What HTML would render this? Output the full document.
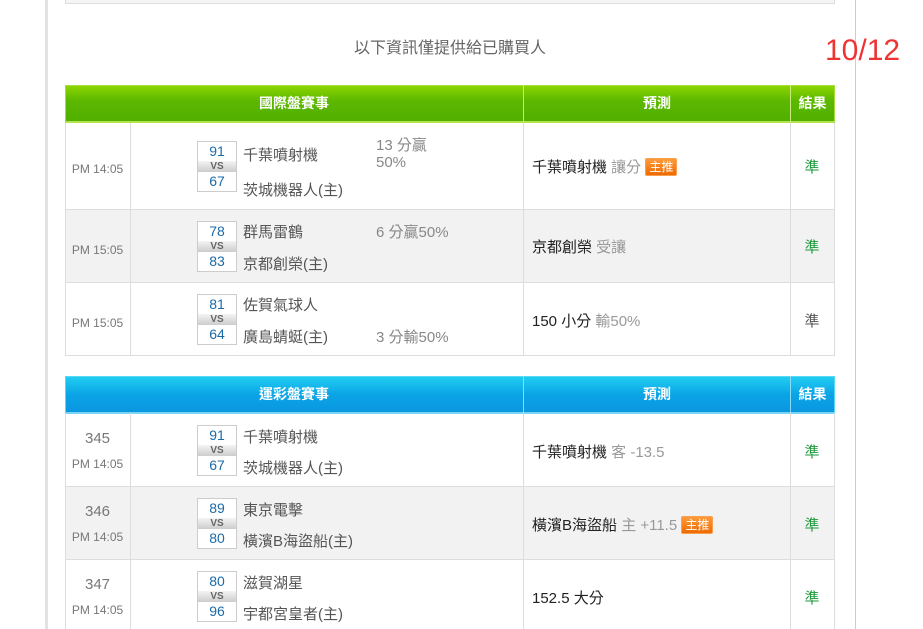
<!DOCTYPE html>
<html><head><meta charset="utf-8">
<style>
*{margin:0;padding:0;box-sizing:border-box}
body{width:923px;height:629px;overflow:hidden;background:#fff;font-family:"Liberation Sans","Noto Sans CJK TC",sans-serif;position:relative;color:#555}
.a{position:absolute;white-space:nowrap}
.vl{position:absolute;width:1px;background:#ddd}
.hl{position:absolute;height:1px;background:#ddd}
.hdr{position:absolute;color:#fff;font-weight:bold;font-size:14px;text-align:center;line-height:37px}
.g{background:linear-gradient(#8fd800,#5db800 40%,#4fae00)}
.b{background:linear-gradient(#22d0f2,#0ba4e6 50%,#0a96e0)}
.sb{position:absolute;width:40px;height:51px;border:1px solid #ccc;background:#fff}
.sb div{height:19px;text-align:center;font-size:14px;color:#1a6aa8;line-height:19px}
.sb .vs{height:11px;line-height:11px;font-size:10px;font-weight:bold;color:#666;background:linear-gradient(#f4f4f4,#ccc);}
.t{font-size:15px;color:#555}
.tm{font-size:12px;color:#777;text-align:center;width:65px}
.num{font-size:15px;color:#777;text-align:center;width:65px}
.p{font-size:15px;color:#222}
.p span{color:#999}
.ok{font-size:15px;color:#1a9a3a;width:44px;text-align:center}
.tag{display:inline-block;background:linear-gradient(#ff9a3a,#ee6a00);color:#fff;font-size:12px;line-height:16px;padding:0 3px;border:1px solid #f7a050;border-radius:2px;vertical-align:1px}
</style></head><body>
<div class="a" style="left:45px;top:0;width:3px;height:629px;background:#e2e2e2"></div>
<div class="vl" style="left:855px;top:0;height:629px;background:#ccc"></div>
<div class="a" style="left:65px;top:0;width:770px;height:4px;border:1px solid #ddd;border-top:0;background:#f4f4f4"></div>
<div class="a" style="left:0;top:34px;width:900px;text-align:center;font-size:16px;color:#666">以下資訊僅提供給已購買人</div>
<div class="a" style="left:825px;top:34px;font-size:30px;color:#e33">10/12</div>

<!-- table 1 -->
<div class="hdr g" style="left:65px;top:85px;width:458px;height:38px">國際盤賽事</div>
<div class="hdr g" style="left:524px;top:85px;width:266px;height:38px">預測</div>
<div class="hdr g" style="left:791px;top:85px;width:43px;height:38px">結果</div>
<div class="a" style="left:65px;top:85px;width:770px;height:38px;border:1px solid #a8dc3a;border-bottom:2px solid #b4e44a;pointer-events:none"></div>
<div class="vl" style="left:523px;top:85px;height:38px;background:#c8ec7a"></div>
<div class="vl" style="left:790px;top:85px;height:38px;background:#c8ec7a"></div>
<div class="a" style="left:66px;top:209px;width:768px;height:73px;background:#f2f2f2"></div>
<div class="vl" style="left:65px;top:123px;height:233px"></div>
<div class="vl" style="left:130px;top:123px;height:233px"></div>
<div class="vl" style="left:523px;top:123px;height:233px"></div>
<div class="vl" style="left:790px;top:123px;height:233px"></div>
<div class="vl" style="left:834px;top:123px;height:233px"></div>
<div class="hl" style="left:65px;top:209px;width:770px"></div>
<div class="hl" style="left:65px;top:282px;width:770px"></div>
<div class="hl" style="left:65px;top:355px;width:770px"></div>

<div class="a tm" style="left:65px;top:162px">PM 14:05</div>
<div class="sb" style="left:197px;top:141px"><div>91</div><div class="vs">VS</div><div>67</div></div>
<div class="a t" style="left:243px;top:144px">千葉噴射機</div>
<div class="a t" style="left:243px;top:179px">茨城機器人(主)</div>
<div class="a t" style="left:376px;top:134px;color:#888">13 分贏</div>
<div class="a t" style="left:376px;top:154px;color:#888">50%</div>
<div class="a p" style="left:532px;top:156px">千葉噴射機 <span>讓分</span> <i class="tag" style="font-style:normal">主推</i></div>
<div class="a ok" style="left:790px;top:156px">準</div>

<div class="a tm" style="left:65px;top:243px">PM 15:05</div>
<div class="sb" style="left:197px;top:221px"><div>78</div><div class="vs">VS</div><div>83</div></div>
<div class="a t" style="left:243px;top:221px">群馬雷鶴</div>
<div class="a t" style="left:243px;top:253px">京都創榮(主)</div>
<div class="a t" style="left:376px;top:221px;color:#888">6 分贏50%</div>
<div class="a p" style="left:532px;top:236px">京都創榮 <span>受讓</span></div>
<div class="a ok" style="left:790px;top:236px">準</div>

<div class="a tm" style="left:65px;top:316px">PM 15:05</div>
<div class="sb" style="left:197px;top:294px"><div>81</div><div class="vs">VS</div><div>64</div></div>
<div class="a t" style="left:243px;top:294px">佐賀氣球人</div>
<div class="a t" style="left:243px;top:326px">廣島蜻蜓(主)</div>
<div class="a t" style="left:376px;top:326px;color:#888">3 分輸50%</div>
<div class="a p" style="left:532px;top:310px">150 小分 <span>輸50%</span></div>
<div class="a ok" style="left:790px;top:310px;color:#555">準</div>

<!-- table 2 -->
<div class="hdr b" style="left:65px;top:376px;width:458px;height:37px">運彩盤賽事</div>
<div class="hdr b" style="left:524px;top:376px;width:266px;height:37px">預測</div>
<div class="hdr b" style="left:791px;top:376px;width:43px;height:37px">結果</div>
<div class="a" style="left:65px;top:376px;width:770px;height:38px;border:1px solid #5ad8f4;border-bottom:2px solid #7ad4f4;pointer-events:none"></div>
<div class="vl" style="left:523px;top:376px;height:38px;background:#8adcf6"></div>
<div class="vl" style="left:790px;top:376px;height:38px;background:#8adcf6"></div>
<div class="a" style="left:66px;top:486px;width:768px;height:73px;background:#f2f2f2"></div>
<div class="vl" style="left:65px;top:413px;height:216px"></div>
<div class="vl" style="left:130px;top:413px;height:216px"></div>
<div class="vl" style="left:523px;top:413px;height:216px"></div>
<div class="vl" style="left:790px;top:413px;height:216px"></div>
<div class="vl" style="left:834px;top:413px;height:216px"></div>
<div class="hl" style="left:65px;top:486px;width:770px"></div>
<div class="hl" style="left:65px;top:559px;width:770px"></div>

<div class="a num" style="left:65px;top:430px">345</div>
<div class="a tm" style="left:65px;top:457px">PM 14:05</div>
<div class="sb" style="left:197px;top:425px"><div>91</div><div class="vs">VS</div><div>67</div></div>
<div class="a t" style="left:243px;top:426px">千葉噴射機</div>
<div class="a t" style="left:243px;top:457px">茨城機器人(主)</div>
<div class="a p" style="left:532px;top:441px">千葉噴射機 <span>客 -13.5</span></div>
<div class="a ok" style="left:790px;top:441px">準</div>

<div class="a num" style="left:65px;top:503px">346</div>
<div class="a tm" style="left:65px;top:530px">PM 14:05</div>
<div class="sb" style="left:197px;top:498px"><div>89</div><div class="vs">VS</div><div>80</div></div>
<div class="a t" style="left:243px;top:499px">東京電擊</div>
<div class="a t" style="left:243px;top:530px">橫濱B海盜船(主)</div>
<div class="a p" style="left:532px;top:514px">橫濱B海盜船 <span>主 +11.5</span> <i class="tag" style="font-style:normal">主推</i></div>
<div class="a ok" style="left:790px;top:514px">準</div>

<div class="a num" style="left:65px;top:576px">347</div>
<div class="a tm" style="left:65px;top:603px">PM 14:05</div>
<div class="sb" style="left:197px;top:571px"><div>80</div><div class="vs">VS</div><div>96</div></div>
<div class="a t" style="left:243px;top:572px">滋賀湖星</div>
<div class="a t" style="left:243px;top:603px">宇都宮皇者(主)</div>
<div class="a p" style="left:532px;top:587px">152.5 大分</div>
<div class="a ok" style="left:790px;top:587px">準</div>
</body></html>
